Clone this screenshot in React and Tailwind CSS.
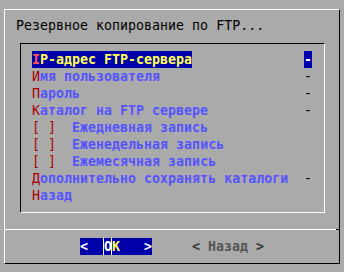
import React from 'react';

// whiptail-style menu on a 43x16 terminal grid (8x17 cells)
const items = [
  { key: 'I', rest: 'P-адрес FTP-сервера', value: '-', active: true },
  { key: 'И', rest: 'мя пользователя', value: '-' },
  { key: 'П', rest: 'ароль', value: '-' },
  { key: 'К', rest: 'аталог на FTP сервере', value: '-' },
  { key: '[ ]', rest: '  Ежедневная запись' },
  { key: '[ ]', rest: '  Еженедельная запись' },
  { key: '[ ]', rest: '  Ежемесячная запись' },
  { key: 'Д', rest: 'ополнительно сохранять каталоги', value: '-' },
  { key: 'Н', rest: 'азад' },
];

function MenuRow({ item }) {
  return (
    <div className="flex h-[17px] items-stretch">
      <span className={`whitespace-pre ${item.active ? 'bg-[#0000aa]' : ''}`}>
        <span className={item.active ? 'font-bold text-[#ff5555]' : 'text-[#aa0000]'}>{item.key}</span>
        <span className={`font-bold ${item.active ? 'text-[#ffff55]' : 'text-[#5555ff]'}`}>{item.rest}</span>
      </span>
      <span
        className={`ml-auto mr-[12px] w-[8px] ${
          item.active ? 'bg-[#0000aa] text-white font-bold' : 'text-black'
        }`}
      >
        {item.value || ''}
      </span>
    </div>
  );
}

export default function App() {
  return (
    <div
      className="w-[344px] h-[272px] bg-[#aaaaaa] pt-[9px] pl-[4px] text-[13.3px] leading-[17px] overflow-hidden"
      style={{ fontFamily: '"DejaVu Sans Mono", "Liberation Mono", monospace' }}
    >
      {/* Outer dialog */}
      <div className="w-[336px] h-[255px] border-t border-l border-white border-r border-b border-r-black border-b-black flex flex-col">
        <div className="mt-[7px] pl-[11px] h-[17px] text-black whitespace-pre">
          Резервное копирование по FTP...
        </div>

        {/* Menu box */}
        <div className="mt-[9px] ml-[15px] w-[305px] h-[170px] border-t border-l border-black border-r border-b border-r-white border-b-white pt-[7px] pl-[11px]">
          {items.map((item, i) => (
            <MenuRow key={i} item={item} />
          ))}
        </div>

        {/* Separator */}
        <div className="mt-[16px] flex h-[1px]">
          <div className="flex-1 bg-white" />
          <div className="w-[3px] bg-black" />
        </div>

        {/* Buttons */}
        <div className="mt-[8px] h-[17px] pl-[75px] flex font-bold">
          <div className="w-[72px] bg-[#0000aa] flex text-white">
            <span className="w-[8px]">&lt;</span>
            <span className="w-[15px]" />
            <span className="w-[9px] border-l border-r border-white text-center leading-[17px]">O</span>
            <span className="w-[8px] text-[#ffff55]">K</span>
            <span className="w-[24px]" />
            <span className="w-[8px]">&gt;</span>
          </div>
          <div className="ml-[40px] whitespace-pre text-[#555555]">
            <span className="text-[#333333]">&lt;</span> Назад <span className="text-[#333333]">&gt;</span>
          </div>
        </div>
      </div>
    </div>
  );
}
